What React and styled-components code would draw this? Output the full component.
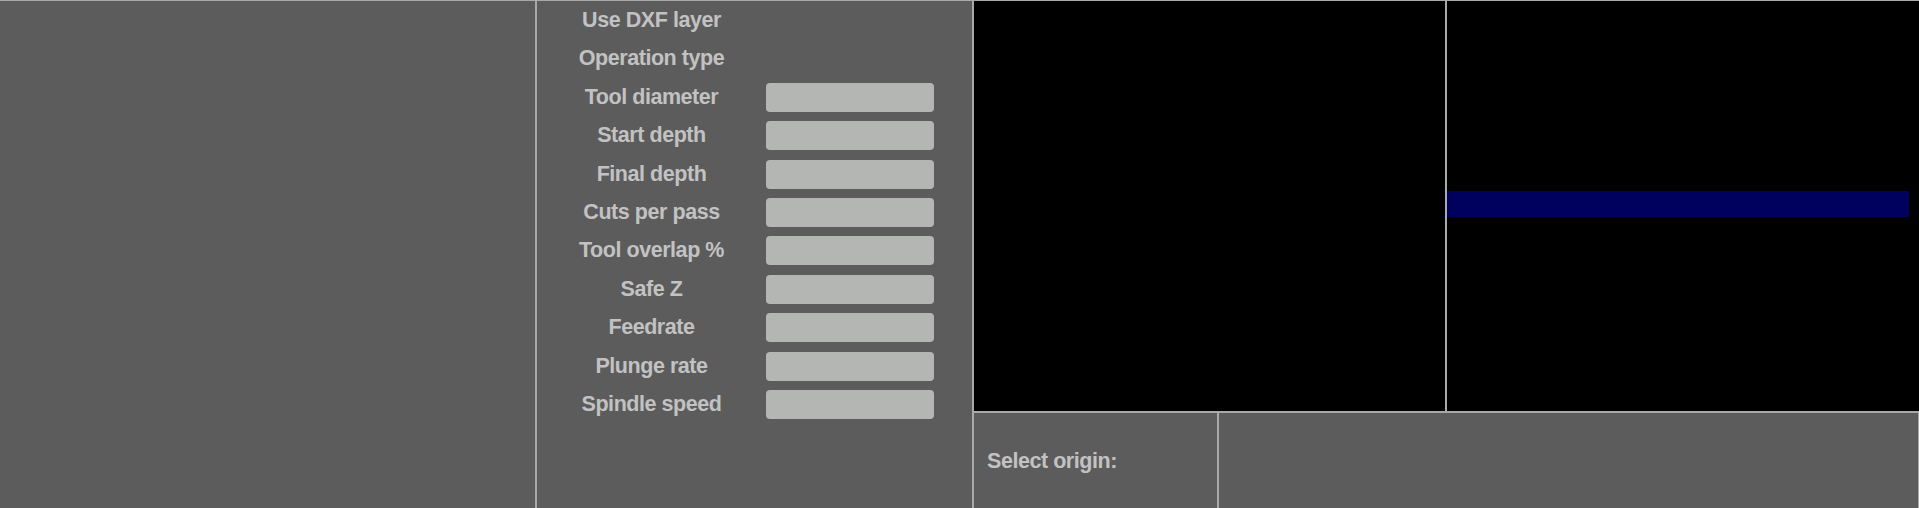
import React from "react"
import styled, { createGlobalStyle } from "styled-components"

const GlobalStyle = createGlobalStyle`
  html, body {
    margin: 0;
    padding: 0;
    background-color: #5c5c5c;
    overflow: hidden;
  }
  * {
    box-sizing: border-box;
  }
`

const Screen = styled.div`
  width: 1919px;
  height: 508px;
  display: flex;
  background-color: #5c5c5c;
  font-family: "Liberation Sans", Arial, sans-serif;
  font-weight: bold;
  color: #c2c2c2;
  overflow: hidden;
`

const Panel = styled.section`
  width: ${(p) => p.width}px;
  height: 100%;
  border: 1px solid #a9a9a9;
  border-bottom: none;
  ${(p) => p.noLeft && "border-left: none;"}
  background-color: #5c5c5c;
`

const Form = styled.div`
  display: grid;
  grid-template-columns: 229px 168px;
  grid-auto-rows: 29px;
  row-gap: 9.4px;
  padding-top: 5px;
`

const Label = styled.div`
  display: flex;
  align-items: center;
  justify-content: center;
  font-size: 21.5px;
  letter-spacing: -0.45px;
  white-space: nowrap;
`

const Field = styled.input`
  width: 168px;
  height: 29px;
  border: none;
  border-radius: 4px;
  background-color: #b4b6b4;
  outline: none;
`

const Empty = styled.div``

const Workspace = styled.div`
  flex: 1;
  display: flex;
  flex-direction: column;
`

const Views = styled.div`
  height: 412px;
  display: flex;
`

const Canvas = styled.div`
  flex: ${(p) => p.basis ? `0 0 ${p.basis}px` : 1};
  height: 100%;
  border: 1px solid #a9a9a9;
  border-right: ${(p) => p.basis ? "1px solid #a9a9a9" : "none"};
  background-color: #000;
`

const TrackView = styled(Canvas)`
  padding-top: 190px;
`

const Track = styled.div`
  width: 462px;
  height: 26px;
  background-color: #00005e;
`

const Footer = styled.div`
  flex: 1;
  display: flex;
`

const OriginBox = styled.div`
  width: 245px;
  border: 1px solid #a9a9a9;
  border-bottom: none;
  display: flex;
  align-items: center;
  padding-left: 13px;
  padding-top: 2px;
  font-size: 21.5px;
  letter-spacing: -0.45px;
  white-space: nowrap;
`

const OriginPicker = styled.div`
  flex: 1;
  border: 1px solid #a9a9a9;
  border-bottom: none;
`

const fields = [
  ["Use DXF layer", false],
  ["Operation type", false],
  ["Tool diameter", true],
  ["Start depth", true],
  ["Final depth", true],
  ["Cuts per pass", true],
  ["Tool overlap %", true],
  ["Safe Z", true],
  ["Feedrate", true],
  ["Plunge rate", true],
  ["Spindle speed", true],
]

export default function App() {
  return (
    <>
      <GlobalStyle />
      <Screen>
        <Panel width={536} noLeft />
        <Panel width={437}>
          <Form>
            {fields.map(([name, input]) => (
              <React.Fragment key={name}>
                <Label>{name}</Label>
                {input ? <Field type="text" /> : <Empty />}
              </React.Fragment>
            ))}
          </Form>
        </Panel>
        <Workspace>
          <Views>
            <Canvas basis={473} />
            <TrackView>
              <Track />
            </TrackView>
          </Views>
          <Footer>
            <OriginBox>Select origin:</OriginBox>
            <OriginPicker />
          </Footer>
        </Workspace>
      </Screen>
    </>
  )
}
